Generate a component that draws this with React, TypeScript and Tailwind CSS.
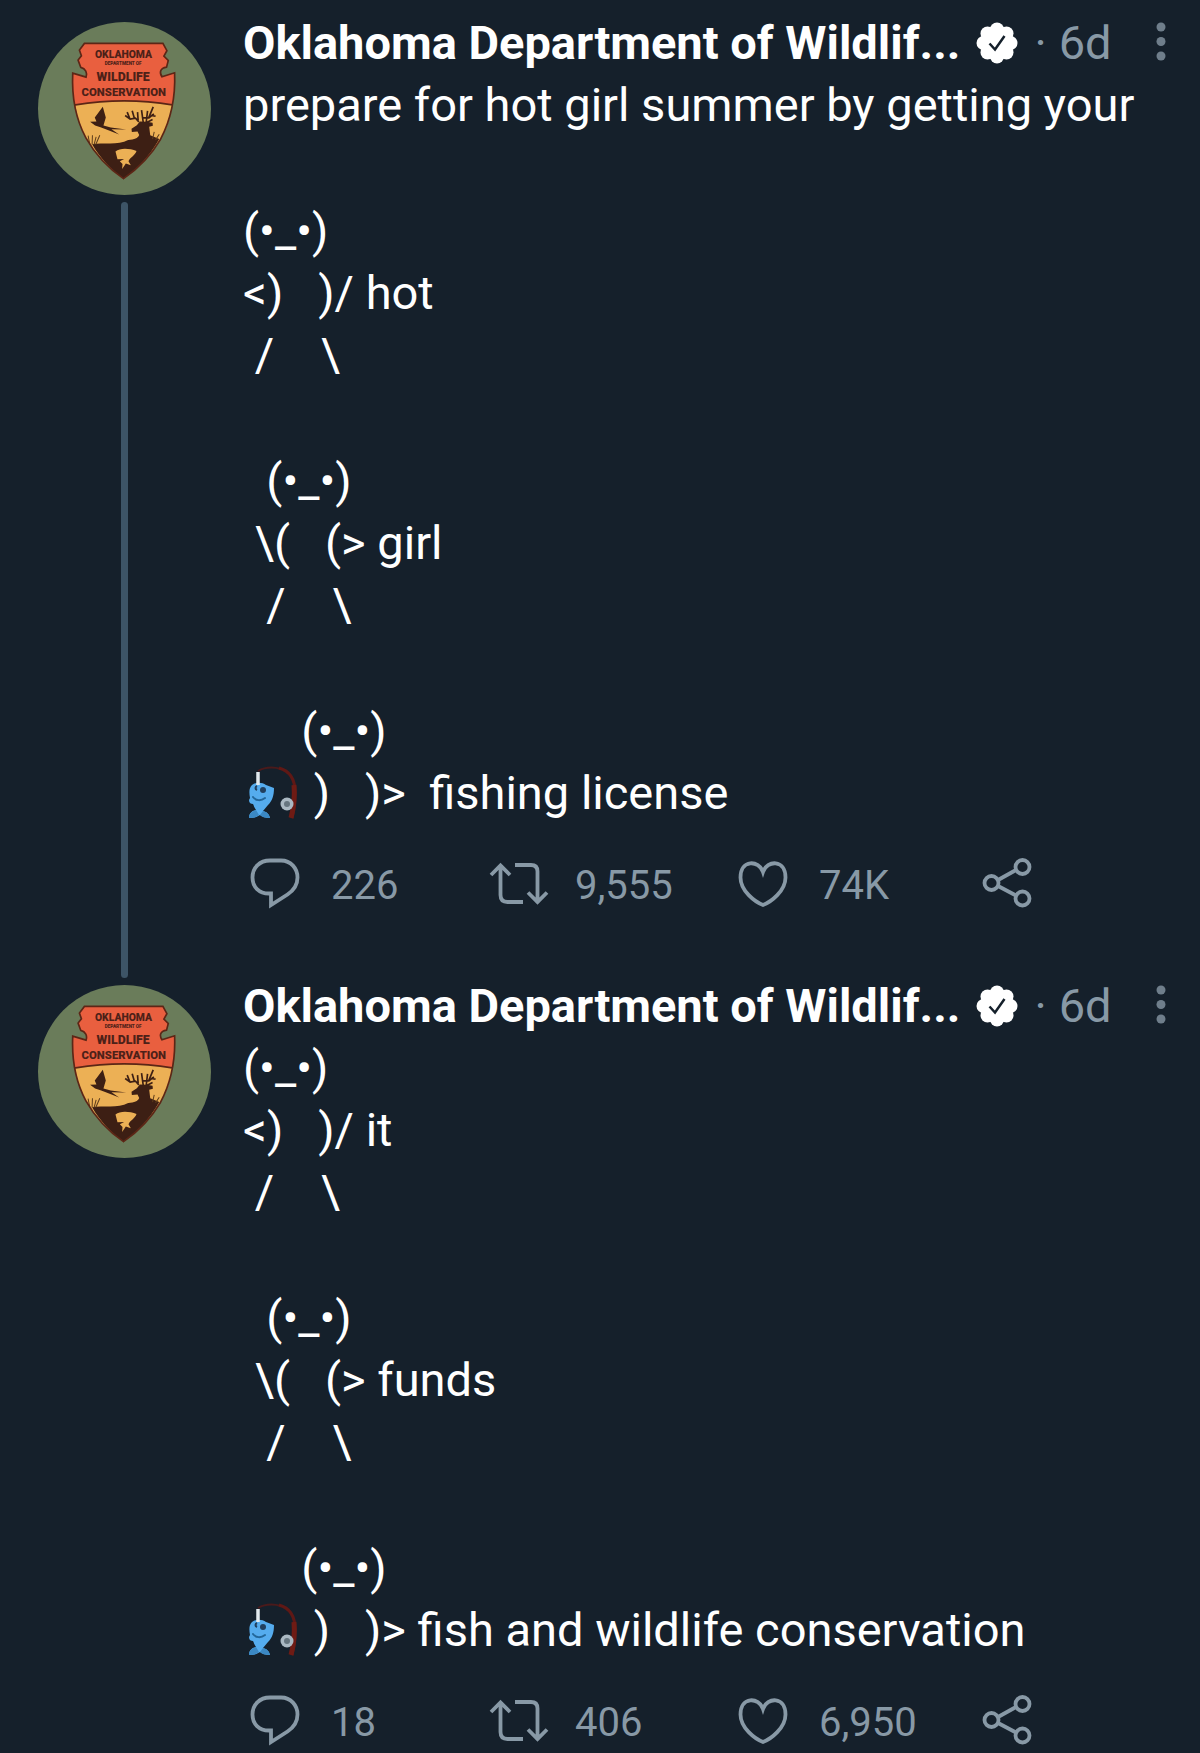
import type { ReactNode } from 'react';

interface Tweet {
  id: string;
  stanzas: ReactNode[];
  replies: string;
  retweets: string;
  likes: string;
}

function FishingPole() {
  return (
    <svg
      viewBox="0 0 59 59"
      role="img"
      aria-label="fishing pole"
      className="inline-block size-[59px] align-[-13px]"
    >
      <path d="M15 8C22 4 31 4 38 6" fill="none" stroke="#4a1a1b" strokeWidth="2" />
      <path d="M36 5C47 8 52 17 52 29c0 10-1 18-3 26" fill="none" stroke="#5f1815" strokeWidth="3" />
      <path d="M51 22c1 12 0 22-3 33" fill="none" stroke="#6e1b14" strokeWidth="5" />
      <path
        d="M9 22c4-3 10-3 14 0l8 3c0 8-2 13-6 17l-5 6c4 1 6 3 7 7-5 0-8-1-10-3-3 2-6 3-11 3 0-4 2-7 7-8-2-3-2-4-3-6-2 0-4-1-4-4l1-2c-1-6-1-10 2-13Z"
        fill="#55acee"
      />
      <path d="M6 55c0-4 2-6 7-8l3 5c-2 2-5 3-10 3ZM27 55c-1-4-3-6-7-7l-3 4c2 2 5 3 10 3Z" fill="#3b88c3" />
      <path d="M10 34c3 4 8 4 12 1" fill="none" stroke="#226699" strokeWidth="2" strokeLinecap="round" />
      <circle cx="20" cy="27" r="3" fill="#21405f" />
      <path d="M15 9v13" stroke="#e1e8ed" strokeWidth="3.5" />
      <path d="M14 27c-2-1-2-3 0-4" fill="none" stroke="#21405f" strokeWidth="2" />
      <circle cx="44" cy="41" r="6.5" fill="#aab8c2" />
      <circle cx="44" cy="41" r="3" fill="#66757f" />
    </svg>
  );
}

const TWEETS: Tweet[] = [
  {
    id: 'license',
    stanzas: [
      'prepare for hot girl summer by getting your',
      '(•_•)\n<)   )/ hot\n /    \\',
      '  (•_•)\n \\(   (> girl\n  /    \\',
      <>
        {'     (•_•)\n'}
        <FishingPole />
        {' )   )>  fishing license'}
      </>,
    ],
    replies: '226',
    retweets: '9,555',
    likes: '74K',
  },
  {
    id: 'funds',
    stanzas: [
      '(•_•)\n<)   )/ it\n /    \\',
      '  (•_•)\n \\(   (> funds\n  /    \\',
      <>
        {'     (•_•)\n'}
        <FishingPole />
        {' )   )> fish and wildlife conservation'}
      </>,
    ],
    replies: '18',
    retweets: '406',
    likes: '6,950',
  },
];

function Avatar() {
  return (
    <svg viewBox="26 38 518 518" className="size-[173px] shrink-0" role="img" aria-label="Oklahoma Department of Wildlife Conservation">
      <circle cx="285" cy="297" r="259" fill="#6a7c5a" />
      <path
        d="M165 102H400L412 124 403 140 416 153 411 173C391 176 389 190 397 202L435 190C438 260 425 328 393 389 364 438 324 478 282 507 240 478 196 432 169 384 138 326 127 255 130 191L170 203C174 190 169 178 154 174L146 152 156 139 150 122Z"
        fill="#e95f3f"
      />
      <path
        d="M138 286Q285 262 428 286C422 332 408 366 393 389 364 438 324 478 282 507 240 478 196 432 169 384 152 352 143 322 138 286Z"
        fill="#ecb055"
      />
      <path
        d="M188 404C220 398 265 408 296 391 315 389 325 386 329 376L324 366 307 367 306 358 322 347 331 336 352 337 369 340 370 349 359 352 362 377 389 388C360 440 322 480 282 507 246 482 212 446 188 404Z"
        fill="#3d1f14"
      />
      <path
        d="M328 337 318 326 302 329 287 318M301 328 293 308M315 328 308 304M326 334 324 308M341 338 336 302M350 339 354 304M341 325 358 325 373 313M357 326 371 292M365 318 378 320M353 338 369 330"
        fill="none"
        stroke="#3d1f14"
        strokeWidth="5"
      />
      <path
        d="M182 337 201 336 196 324 220 292 229 324 222 348 244 354 290 360 246 359 269 375 229 359 213 353 197 348Z"
        fill="#3d1f14"
      />
      <path
        d="M258 426C272 414 301 417 321 424 316 439 302 442 297 455L304 467 289 462 278 478 279 463 271 455 284 448 264 449Z"
        fill="#ecb055"
      />
      <path
        d="M181 404 176 378M188 405 189 377M194 405 200 382M199 405 211 377M369 389 374 367M378 391 389 374"
        fill="none"
        stroke="#5d3c1b"
        strokeWidth="3"
      />
      <path
        d="M165 102H400L412 124 403 140 416 153 411 173C391 176 389 190 397 202L435 190C438 260 425 328 393 389 364 438 324 478 282 507 240 478 196 432 169 384 138 326 127 255 130 191L170 203C174 190 169 178 154 174L146 152 156 139 150 122ZM138 286Q285 262 428 286"
        fill="none"
        stroke="#5c2616"
        strokeWidth="5"
      />
      <g fill="#4d2118" textAnchor="middle" className="font-[Roboto,sans-serif] font-black">
        <text x="282" y="147" fontSize="31">OKLAHOMA</text>
        <text x="281" y="167" fontSize="14">DEPARTMENT OF</text>
        <text x="281" y="214" fontSize="37">WILDLIFE</text>
        <text x="283" y="260" fontSize="34">CONSERVATION</text>
      </g>
    </svg>
  );
}

function VerifiedBadge() {
  return (
    <svg viewBox="0 0 42 42" className="size-[42px] shrink-0" role="img" aria-label="Verified">
      <g fill="#fff">
        <circle cx="21" cy="21" r="17" />
        <circle cx="21" cy="7.5" r="7" />
        <circle cx="30.5" cy="11.5" r="7" />
        <circle cx="34.5" cy="21" r="7" />
        <circle cx="30.5" cy="30.5" r="7" />
        <circle cx="21" cy="34.5" r="7" />
        <circle cx="11.5" cy="30.5" r="7" />
        <circle cx="7.5" cy="21" r="7" />
        <circle cx="11.5" cy="11.5" r="7" />
      </g>
      <path d="m13.5 21.500 5.500 6L28.500 14" fill="none" stroke="#15202b" strokeWidth="2.500" />
    </svg>
  );
}

function ActionIcon({ children }: { children: ReactNode }) {
  return (
    <svg
      viewBox="0 0 60 60"
      className="size-[60px] shrink-0"
      fill="none"
      stroke="currentColor"
      strokeWidth="3.8"
      aria-hidden="true"
    >
      {children}
    </svg>
  );
}

function Action({ label, count, icon }: { label: string; count: string; icon: ReactNode }) {
  return (
    <button type="button" aria-label={`${label} ${count}`} className="flex flex-1 items-end gap-[26px]">
      <ActionIcon>{icon}</ActionIcon>
      <span className="leading-[54px]">{count}</span>
    </button>
  );
}

function TweetItem({ tweet, threaded }: { tweet: Tweet; threaded: boolean }) {
  return (
    <article className="flex gap-8">
      <div className="flex flex-col items-center">
        <Avatar />
        {threaded && <div className="my-[7px] w-[7px] flex-1 rounded-full bg-[#3d5466]" />}
      </div>

      <div className={threaded ? '-mt-2.5 min-w-0 flex-1 pb-[72px]' : '-mt-2.5 min-w-0 flex-1'}>
        <header className="flex h-[62px] items-center text-[47px] leading-[62px]">
          <h2 className="font-bold whitespace-nowrap">Oklahoma Department of Wildlif...</h2>
          <span className="ml-4 flex">
            <VerifiedBadge />
          </span>
          <span className="ml-4 text-[#8899a6]">·</span>
          <time className="ml-3 text-[#8899a6]">6d</time>
          <button type="button" aria-label="More" className="mr-[34px] ml-auto text-[#6f7e8b]">
            <svg viewBox="0 0 10 42" className="h-[42px] w-2.5" fill="currentColor">
              <circle cx="5" cy="5" r="4.5" />
              <circle cx="5" cy="19.5" r="4.5" />
              <circle cx="5" cy="34" r="4.5" />
            </svg>
          </button>
        </header>

        <div className="flex flex-col gap-16 text-[47px] leading-[62px] whitespace-pre">
          {tweet.stanzas.map((stanza, i) => (
            <p key={i}>{stanza}</p>
          ))}
        </div>

        <footer className="mt-[29px] flex pr-[163px] pl-0.5 text-[40px] text-[#8899a6]">
          <Action
            label="Replies"
            count={tweet.replies}
            icon={<path d="M25 7.5h11c10 0 16.5 8 16.5 17 0 8-4 13-10 17L26 52V40.500h-2C14 40.500 7.500 34 7.500 24.500S14.500 7.500 25 7.500Z" />}
          />
          <Action
            label="Retweets"
            count={tweet.retweets}
            icon={
              <>
                <path d="m2 22 9.5-9.500L21 22M11.500 13v29q0 7 7 7H34" />
                <path d="M26 12h16q6.5 0 6.500 6.500V48M39 39.500l9.500 9.500 9.500-9.500" />
              </>
            }
          />
          <Action
            label="Likes"
            count={tweet.likes}
            icon={<path d="M30 19C26 7 7.5 6 7.500 24.500 7.500 38 22 49 30 52c8-3 22.500-14 22.500-27.500C52.500 6 34 7 30 19Z" />}
          />
          <button type="button" aria-label="Share" className="shrink-0">
            <ActionIcon>
              <circle cx="14.5" cy="30" r="7" />
              <circle cx="45.5" cy="14" r="7" />
              <circle cx="45.5" cy="45.5" r="7" />
              <path d="m21 27 18-10M21 33l18 9.5" />
            </ActionIcon>
          </button>
        </footer>
      </div>
    </article>
  );
}

export default function App() {
  return (
    <main className="min-h-screen overflow-hidden bg-[#15202b] pt-[22px] pl-[38px] font-[Roboto,sans-serif] text-white">
      {TWEETS.map((tweet, i) => (
        <TweetItem key={tweet.id} tweet={tweet} threaded={i < TWEETS.length - 1} />
      ))}
    </main>
  );
}
